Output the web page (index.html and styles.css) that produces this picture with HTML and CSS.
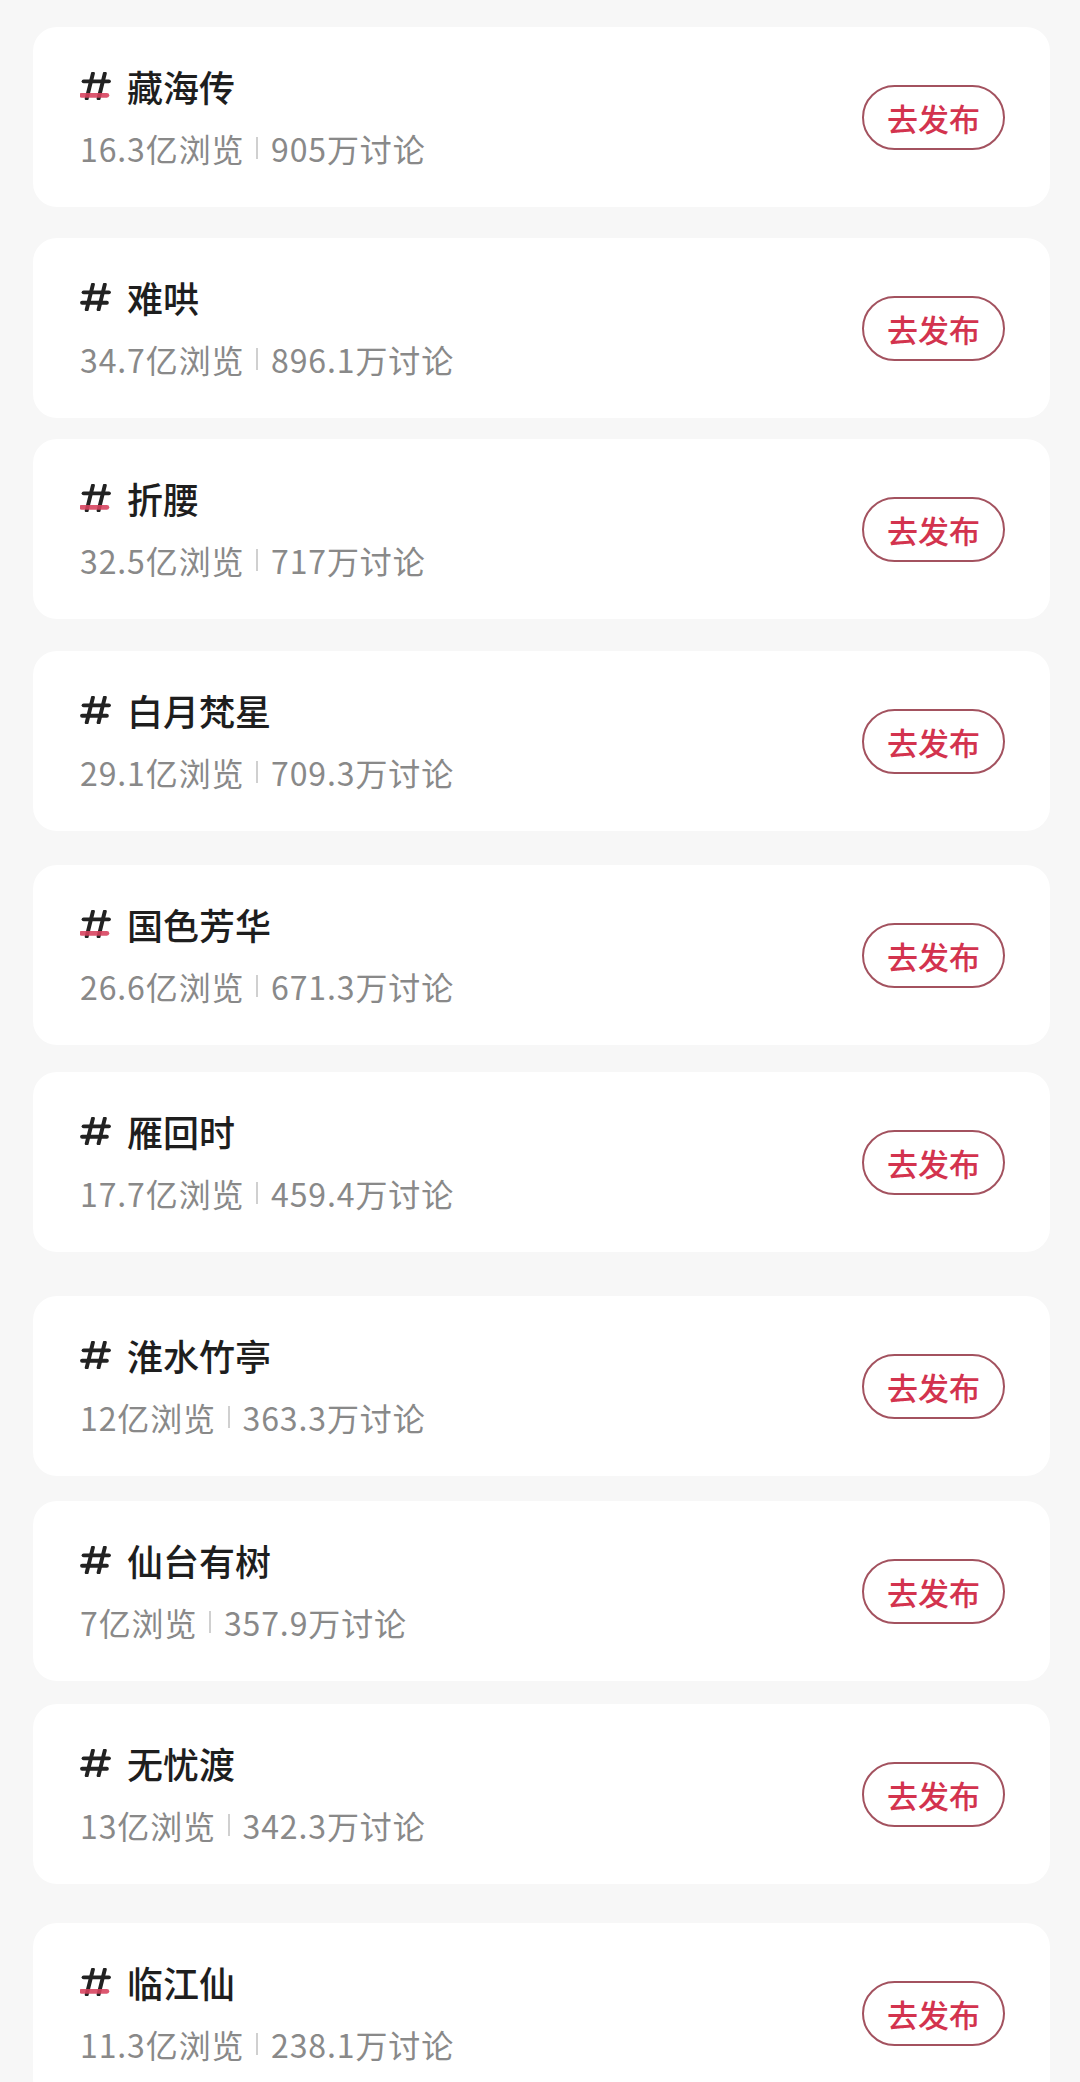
FILE: index.html
```html
<!DOCTYPE html>
<html lang="zh-CN">
<head>
<meta charset="utf-8">
<title>话题列表</title>
<link rel="stylesheet" href="styles.css">
</head>
<body>
<main class="list">
  <section class="card">
    <div class="info">
      <div class="title"><svg class="hash" viewBox="0 0 30 27"><line x1="12.5" y1="1.5" x2="6.5" y2="25.5"/><line x1="24" y1="1.5" x2="18" y2="25.5"/><line x1="3.5" y1="9" x2="28" y2="9"/><line class="mark" x1="1.5" y1="22.5" x2="26" y2="22.5"/></svg><span>藏海传</span></div>
      <div class="stats"><span>16.3亿浏览</span><i class="sep"></i><span>905万讨论</span></div>
    </div>
    <button class="post">去发布</button>
  </section>
  <section class="card">
    <div class="info">
      <div class="title"><svg class="hash" viewBox="0 0 30 27"><line x1="12.5" y1="1.5" x2="6.5" y2="25.5"/><line x1="24" y1="1.5" x2="18" y2="25.5"/><line x1="3.5" y1="9" x2="28" y2="9"/><line x1="2" y1="19" x2="26" y2="19"/></svg><span>难哄</span></div>
      <div class="stats"><span>34.7亿浏览</span><i class="sep"></i><span>896.1万讨论</span></div>
    </div>
    <button class="post">去发布</button>
  </section>
  <section class="card">
    <div class="info">
      <div class="title"><svg class="hash" viewBox="0 0 30 27"><line x1="12.5" y1="1.5" x2="6.5" y2="25.5"/><line x1="24" y1="1.5" x2="18" y2="25.5"/><line x1="3.5" y1="9" x2="28" y2="9"/><line class="mark" x1="1.5" y1="22.5" x2="26" y2="22.5"/></svg><span>折腰</span></div>
      <div class="stats"><span>32.5亿浏览</span><i class="sep"></i><span>717万讨论</span></div>
    </div>
    <button class="post">去发布</button>
  </section>
  <section class="card">
    <div class="info">
      <div class="title"><svg class="hash" viewBox="0 0 30 27"><line x1="12.5" y1="1.5" x2="6.5" y2="25.5"/><line x1="24" y1="1.5" x2="18" y2="25.5"/><line x1="3.5" y1="9" x2="28" y2="9"/><line x1="2" y1="19" x2="26" y2="19"/></svg><span>白月梵星</span></div>
      <div class="stats"><span>29.1亿浏览</span><i class="sep"></i><span>709.3万讨论</span></div>
    </div>
    <button class="post">去发布</button>
  </section>
  <section class="card">
    <div class="info">
      <div class="title"><svg class="hash" viewBox="0 0 30 27"><line x1="12.5" y1="1.5" x2="6.5" y2="25.5"/><line x1="24" y1="1.5" x2="18" y2="25.5"/><line x1="3.5" y1="9" x2="28" y2="9"/><line class="mark" x1="1.5" y1="22.5" x2="26" y2="22.5"/></svg><span>国色芳华</span></div>
      <div class="stats"><span>26.6亿浏览</span><i class="sep"></i><span>671.3万讨论</span></div>
    </div>
    <button class="post">去发布</button>
  </section>
  <section class="card">
    <div class="info">
      <div class="title"><svg class="hash" viewBox="0 0 30 27"><line x1="12.5" y1="1.5" x2="6.5" y2="25.5"/><line x1="24" y1="1.5" x2="18" y2="25.5"/><line x1="3.5" y1="9" x2="28" y2="9"/><line x1="2" y1="19" x2="26" y2="19"/></svg><span>雁回时</span></div>
      <div class="stats"><span>17.7亿浏览</span><i class="sep"></i><span>459.4万讨论</span></div>
    </div>
    <button class="post">去发布</button>
  </section>
  <section class="card">
    <div class="info">
      <div class="title"><svg class="hash" viewBox="0 0 30 27"><line x1="12.5" y1="1.5" x2="6.5" y2="25.5"/><line x1="24" y1="1.5" x2="18" y2="25.5"/><line x1="3.5" y1="9" x2="28" y2="9"/><line x1="2" y1="19" x2="26" y2="19"/></svg><span>淮水竹亭</span></div>
      <div class="stats"><span>12亿浏览</span><i class="sep"></i><span>363.3万讨论</span></div>
    </div>
    <button class="post">去发布</button>
  </section>
  <section class="card">
    <div class="info">
      <div class="title"><svg class="hash" viewBox="0 0 30 27"><line x1="12.5" y1="1.5" x2="6.5" y2="25.5"/><line x1="24" y1="1.5" x2="18" y2="25.5"/><line x1="3.5" y1="9" x2="28" y2="9"/><line x1="2" y1="19" x2="26" y2="19"/></svg><span>仙台有树</span></div>
      <div class="stats"><span>7亿浏览</span><i class="sep"></i><span>357.9万讨论</span></div>
    </div>
    <button class="post">去发布</button>
  </section>
  <section class="card">
    <div class="info">
      <div class="title"><svg class="hash" viewBox="0 0 30 27"><line x1="12.5" y1="1.5" x2="6.5" y2="25.5"/><line x1="24" y1="1.5" x2="18" y2="25.5"/><line x1="3.5" y1="9" x2="28" y2="9"/><line x1="2" y1="19" x2="26" y2="19"/></svg><span>无忧渡</span></div>
      <div class="stats"><span>13亿浏览</span><i class="sep"></i><span>342.3万讨论</span></div>
    </div>
    <button class="post">去发布</button>
  </section>
  <section class="card">
    <div class="info">
      <div class="title"><svg class="hash" viewBox="0 0 30 27"><line x1="12.5" y1="1.5" x2="6.5" y2="25.5"/><line x1="24" y1="1.5" x2="18" y2="25.5"/><line x1="3.5" y1="9" x2="28" y2="9"/><line class="mark" x1="1.5" y1="22.5" x2="26" y2="22.5"/></svg><span>临江仙</span></div>
      <div class="stats"><span>11.3亿浏览</span><i class="sep"></i><span>238.1万讨论</span></div>
    </div>
    <button class="post">去发布</button>
  </section>
</main>
</body>
</html>
```
FILE: styles.css
```css
* { box-sizing: border-box; }
html, body { margin: 0; padding: 0; }
body {
  background: #f7f7f7;
  font-family: "Noto Sans CJK SC", "Noto Sans", sans-serif;
  width: 1080px;
  height: 2082px;
  overflow: hidden;
}
.list {
  display: flex;
  flex-direction: column;
  padding: 27px 30px 0 33px;
}
.card {
  height: 180px;
  background: #ffffff;
  border-radius: 24px;
  display: flex;
  align-items: center;
  justify-content: space-between;
  padding: 0 45px 0 47px;
  margin-top: 28px;
}
.card:first-child { margin-top: 0; }
.card:nth-child(2) { margin-top: 31px; }
.card:nth-child(3) { margin-top: 21px; }
.card:nth-child(4) { margin-top: 32px; }
.card:nth-child(5) { margin-top: 34px; }
.card:nth-child(6) { margin-top: 27px; }
.card:nth-child(7) { margin-top: 44px; }
.card:nth-child(8) { margin-top: 25px; }
.card:nth-child(9) { margin-top: 23px; }
.card:nth-child(10) { margin-top: 39px; }
.info {
  display: flex;
  flex-direction: column;
  gap: 20px;
  padding-bottom: 3px;
}
.title {
  display: flex;
  align-items: center;
  height: 44px;
  font-size: 36px;
  font-weight: 500;
  color: #1e1e1e;
  line-height: 44px;
}
.hash {
  width: 31px;
  height: 28px;
  margin-right: 16px;
  flex: none;
}
.hash line {
  stroke: #222222;
  stroke-width: 3.8;
  stroke-linecap: round;
}
.hash line.mark {
  stroke: #d8405d;
  stroke-width: 4.6;
  opacity: 0.88;
}
.stats {
  display: flex;
  align-items: center;
  height: 40px;
  font-size: 32px;
  line-height: 40px;
  letter-spacing: 0.9px;
  color: #898989;
}
.sep {
  display: block;
  width: 1.5px;
  height: 22px;
  background: #d0d0d0;
  margin: 0 13px 0 12px;
}
.post {
  width: 143px;
  height: 65px;
  border: 2px solid #a3525f;
  border-radius: 33px;
  background: #ffffff;
  color: #d3334e;
  font-family: "Noto Sans CJK SC", "Noto Sans", sans-serif;
  font-size: 31px;
  font-weight: 500;
  padding: 0;
}
```
